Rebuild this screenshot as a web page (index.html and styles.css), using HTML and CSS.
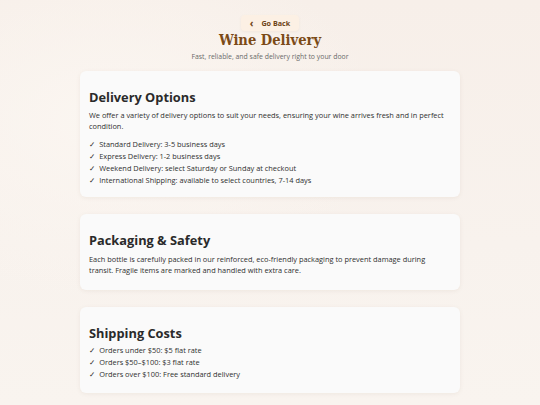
FILE: index.html
```html
<!DOCTYPE html>
<html lang="en">
<head>
<meta charset="utf-8">
<title>Wine Delivery</title>
<link rel="stylesheet" href="styles.css">
</head>
<body>
<div class="page">
  <header class="hero">
    <button class="back"><span class="chev">‹</span> Go Back</button>
    <h1 class="title">Wine Delivery</h1>
    <p class="subtitle">Fast, reliable, and safe delivery right to your door</p>
  </header>
  <main class="cards">
    <section class="card card-first">
      <h2>Delivery Options</h2>
      <p>We offer a variety of delivery options to suit your needs, ensuring your wine arrives fresh and in perfect condition.</p>
      <ul>
        <li>Standard Delivery: 3-5 business days</li>
        <li>Express Delivery: 1-2 business days</li>
        <li>Weekend Delivery: select Saturday or Sunday at checkout</li>
        <li>International Shipping: available to select countries, 7-14 days</li>
      </ul>
    </section>
    <section class="card card-text">
      <h2>Packaging &amp; Safety</h2>
      <p>Each bottle is carefully packed in our reinforced, eco-friendly packaging to prevent damage during transit. Fragile items are marked and handled with extra care.</p>
    </section>
    <section class="card card-last">
      <h2>Shipping Costs</h2>
      <ul class="tight">
        <li>Orders under $50: $5 flat rate</li>
        <li>Orders $50–$100: $3 flat rate</li>
        <li>Orders over $100: Free standard delivery</li>
      </ul>
    </section>
  </main>
</div>
</body>
</html>
```
FILE: styles.css
```css
* { box-sizing: border-box; }
html, body { margin: 0; padding: 0; }
body {
  width: 540px;
  height: 405px;
  overflow: hidden;
  font-family: "Open Sans", "DejaVu Sans", sans-serif;
  color: #2b2b2b;
  background:
    radial-gradient(ellipse at 20% 30%, #fbf6f1 0%, rgba(251,246,241,0) 45%),
    linear-gradient(180deg, #f7efe9 0%, #f8f2ed 60%, #f9f4ef 100%);
}
.page { display: flex; flex-direction: column; align-items: center; }
.hero {
  display: flex; flex-direction: column; align-items: center;
  padding-top: 15px;
}
.back {
  display: flex; align-items: center; gap: 8px;
  height: 16px;
  padding: 0 9px 0 9px;
  border: none;
  border-radius: 4px;
  background: #fcf0e4;
  color: #6e4416;
  font-family: "Open Sans", sans-serif;
  font-weight: 700;
  font-size: 7.2px;
  box-shadow: 0 1px 3px rgba(160,110,60,0.08);
}
.chev { font-size: 10px; line-height: 1; margin-top: -1px; font-weight: 700; }
.title {
  margin: 0;
  font-family: "DejaVu Serif Condensed", "DejaVu Serif", serif;
  font-stretch: condensed;
  font-weight: 700;
  font-size: 14.6px;
  line-height: 18px;
  color: #7b4a17;
}
.subtitle {
  margin: 3px 0 0;
  font-size: 6.9px;
  line-height: 9px;
  color: #6a6a6a;
}
.cards {
  display: flex; flex-direction: column; gap: 17px;
  width: 380px;
  margin-top: 10px;
}
.card {
  background: #fafafa;
  border-radius: 6px;
  padding: 16px 9px 11px;
  box-shadow: 0 1px 4px rgba(120,90,60,0.08);
}
.card-text { padding-bottom: 14px; }
.card-last { padding-bottom: 13px; }
.card h2 {
  margin: 0;
  font-family: "Open Sans", sans-serif;
  font-weight: 700;
  font-size: 12.8px;
  line-height: 20px;
  color: #2a2a2a;
}
.card p {
  margin: 4px 0 0;
  font-size: 7.4px;
  font-weight: 500;
  line-height: 11px;
  color: #2f2f2f;
}
.card-first p { margin-top: 3px; }
.card ul {
  list-style: none;
  margin: 6px 0 0;
  padding: 0;
}
.card ul.tight { margin-top: 1px; }
.card li {
  font-size: 7.4px;
  font-weight: 500;
  line-height: 12px;
  color: #2f2f2f;
}
.card li::before { content: "✓"; margin-right: 4px; }
```
